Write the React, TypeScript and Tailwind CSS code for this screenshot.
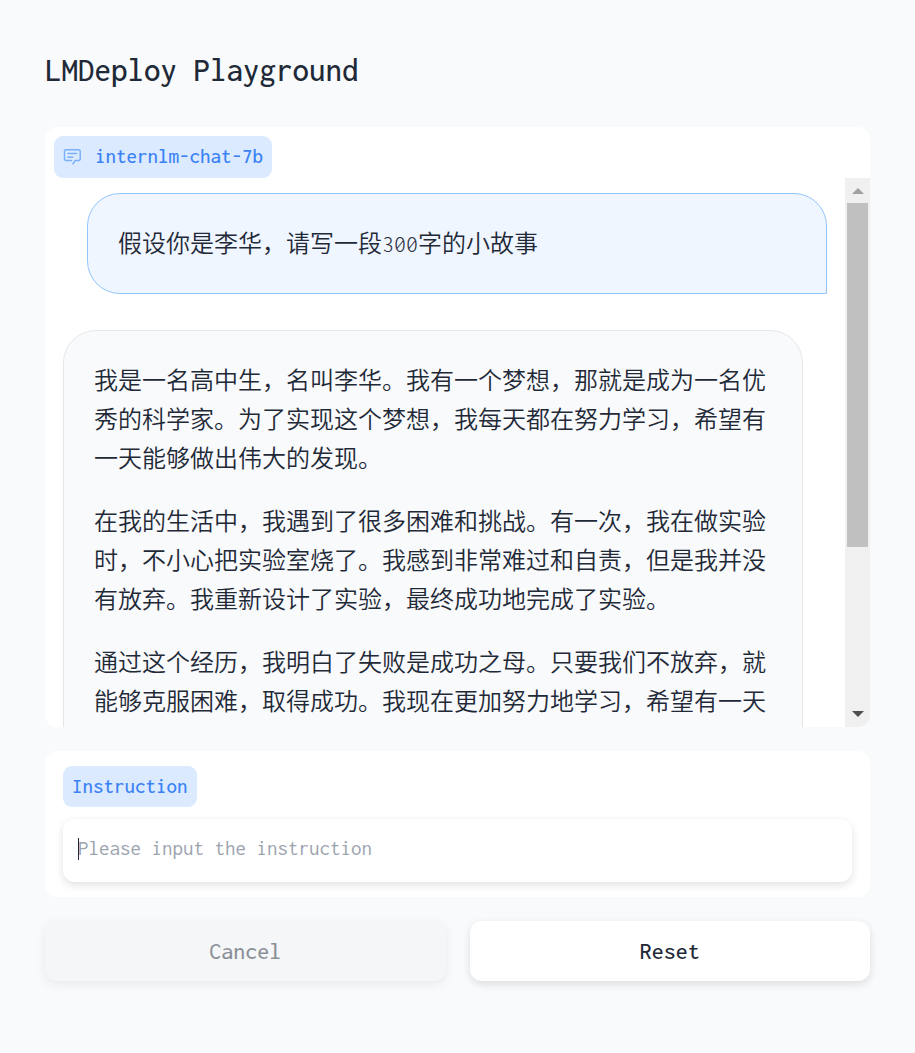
import type { ReactNode } from "react";

const question = "假设你是李华，请写一段300字的小故事";

const answer = [
  "我是一名高中生，名叫李华。我有一个梦想，那就是成为一名优秀的科学家。为了实现这个梦想，我每天都在努力学习，希望有一天能够做出伟大的发现。",
  "在我的生活中，我遇到了很多困难和挑战。有一次，我在做实验时，不小心把实验室烧了。我感到非常难过和自责，但是我并没有放弃。我重新设计了实验，最终成功地完成了实验。",
  "通过这个经历，我明白了失败是成功之母。只要我们不放弃，就能够克服困难，取得成功。我现在更加努力地学习，希望有一天",
];

function ChatIcon() {
  return (
    <svg
      viewBox="0 0 18 18"
      className="size-[18px] text-[#7db0fb]"
      fill="none"
      stroke="currentColor"
      strokeWidth="1.5"
      strokeLinecap="round"
      strokeLinejoin="round"
      aria-hidden="true"
    >
      <path d="M8.5 12.5H3A1.5 1.5 0 0 1 1.5 11V3.2A1.5 1.5 0 0 1 3 1.7h12.7a1.5 1.5 0 0 1 1.5 1.5V11a1.5 1.5 0 0 1-1.5 1.5h-3.5L10 15.8" />
      <path d="M4.9 5.6h8.8M4.9 9.2h5" />
    </svg>
  );
}

function Bubble({ className, children }: { className: string; children: ReactNode }) {
  return (
    <div className={`space-y-6 rounded-t-[33px] border px-[30px] pt-[31px] text-2xl leading-[39px] font-[350] ${className}`}>
      {children}
    </div>
  );
}

function ScrollBar() {
  return (
    <div className="flex w-[25px] shrink-0 flex-col items-center bg-[#f0f0f0]" aria-hidden="true">
      <div className="flex h-[25px] items-center">
        <svg viewBox="0 0 12 6" className="h-1.5 w-3 fill-[#a0a0a0]">
          <path d="M6 0l6 6H0z" />
        </svg>
      </div>
      <div className="w-full flex-1 px-0.5">
        <div className="h-[69%] bg-[#c0c0c0]" />
      </div>
      <div className="flex h-[26px] items-center">
        <svg viewBox="0 0 12 6" className="h-1.5 w-3 fill-[#505050]">
          <path d="M0 0h12L6 6z" />
        </svg>
      </div>
    </div>
  );
}

export default function App() {
  return (
    <main className="min-h-screen bg-slate-50 px-[45px] pt-12 pb-18 font-['Inconsolata','Liberation_Mono','Noto_Sans_CJK_SC',monospace] text-[#1f2937]">
      <h1 className="text-[33px] leading-[44px] font-medium">LMDeploy Playground</h1>

      <section className="mt-[35px] flex h-[600px] flex-col overflow-hidden rounded-xl bg-white">
        <div className="shrink-0 px-[9px] pt-[9px]">
          <div className="flex h-[42px] w-fit items-center gap-3.5 rounded-[9px] bg-blue-100 px-[9px] text-[21px] font-medium text-[#3b82f6]">
            <ChatIcon />
            <span>internlm-chat-7b</span>
          </div>
        </div>
        <div className="flex min-h-0 flex-1">
          <div className="flex-1 space-y-9 overflow-y-auto px-[18px] pt-[15px] [scrollbar-width:none]">
            <Bubble className="ml-6 rounded-bl-[33px] border-[#93c5fd] bg-[#eff6ff] pb-[29px]">
              <p>{question}</p>
            </Bubble>
            <Bubble className="mr-6 rounded-br-[33px] border-gray-200 bg-slate-50 pb-[69px]">
              {answer.map((text) => (
                <p key={text}>{text}</p>
              ))}
            </Bubble>
          </div>
          <ScrollBar />
        </div>
      </section>

      <section className="mt-6 rounded-xl bg-white px-[18px] py-[15px]">
        <label
          htmlFor="instruction"
          className="flex h-[41px] w-fit items-center rounded-[9px] bg-blue-100 px-[9px] text-[21px] font-medium text-[#3b82f6]"
        >
          Instruction
        </label>
        <div className="relative mt-3">
          <input
            id="instruction"
            type="text"
            placeholder="Please input the instruction"
            className="block h-[63px] w-full rounded-xl bg-white px-[15px] pb-1.5 text-[21px] shadow-[0_3px_9px_rgba(0,0,0,0.12)] outline-none placeholder:text-[#9ca3af]"
          />
          <span className="absolute top-[19px] left-[15px] h-[22px] w-px bg-slate-800" aria-hidden="true" />
        </div>
      </section>

      <div className="mt-6 grid grid-cols-2 gap-6 text-2xl font-medium">
        <button
          type="button"
          disabled
          className="h-[60px] rounded-xl bg-gray-100 opacity-50 shadow-[0_3px_9px_rgba(0,0,0,0.12)]"
        >
          Cancel
        </button>
        <button type="button" className="h-[60px] rounded-xl bg-white shadow-[0_3px_9px_rgba(0,0,0,0.12)]">
          Reset
        </button>
      </div>
    </main>
  );
}
